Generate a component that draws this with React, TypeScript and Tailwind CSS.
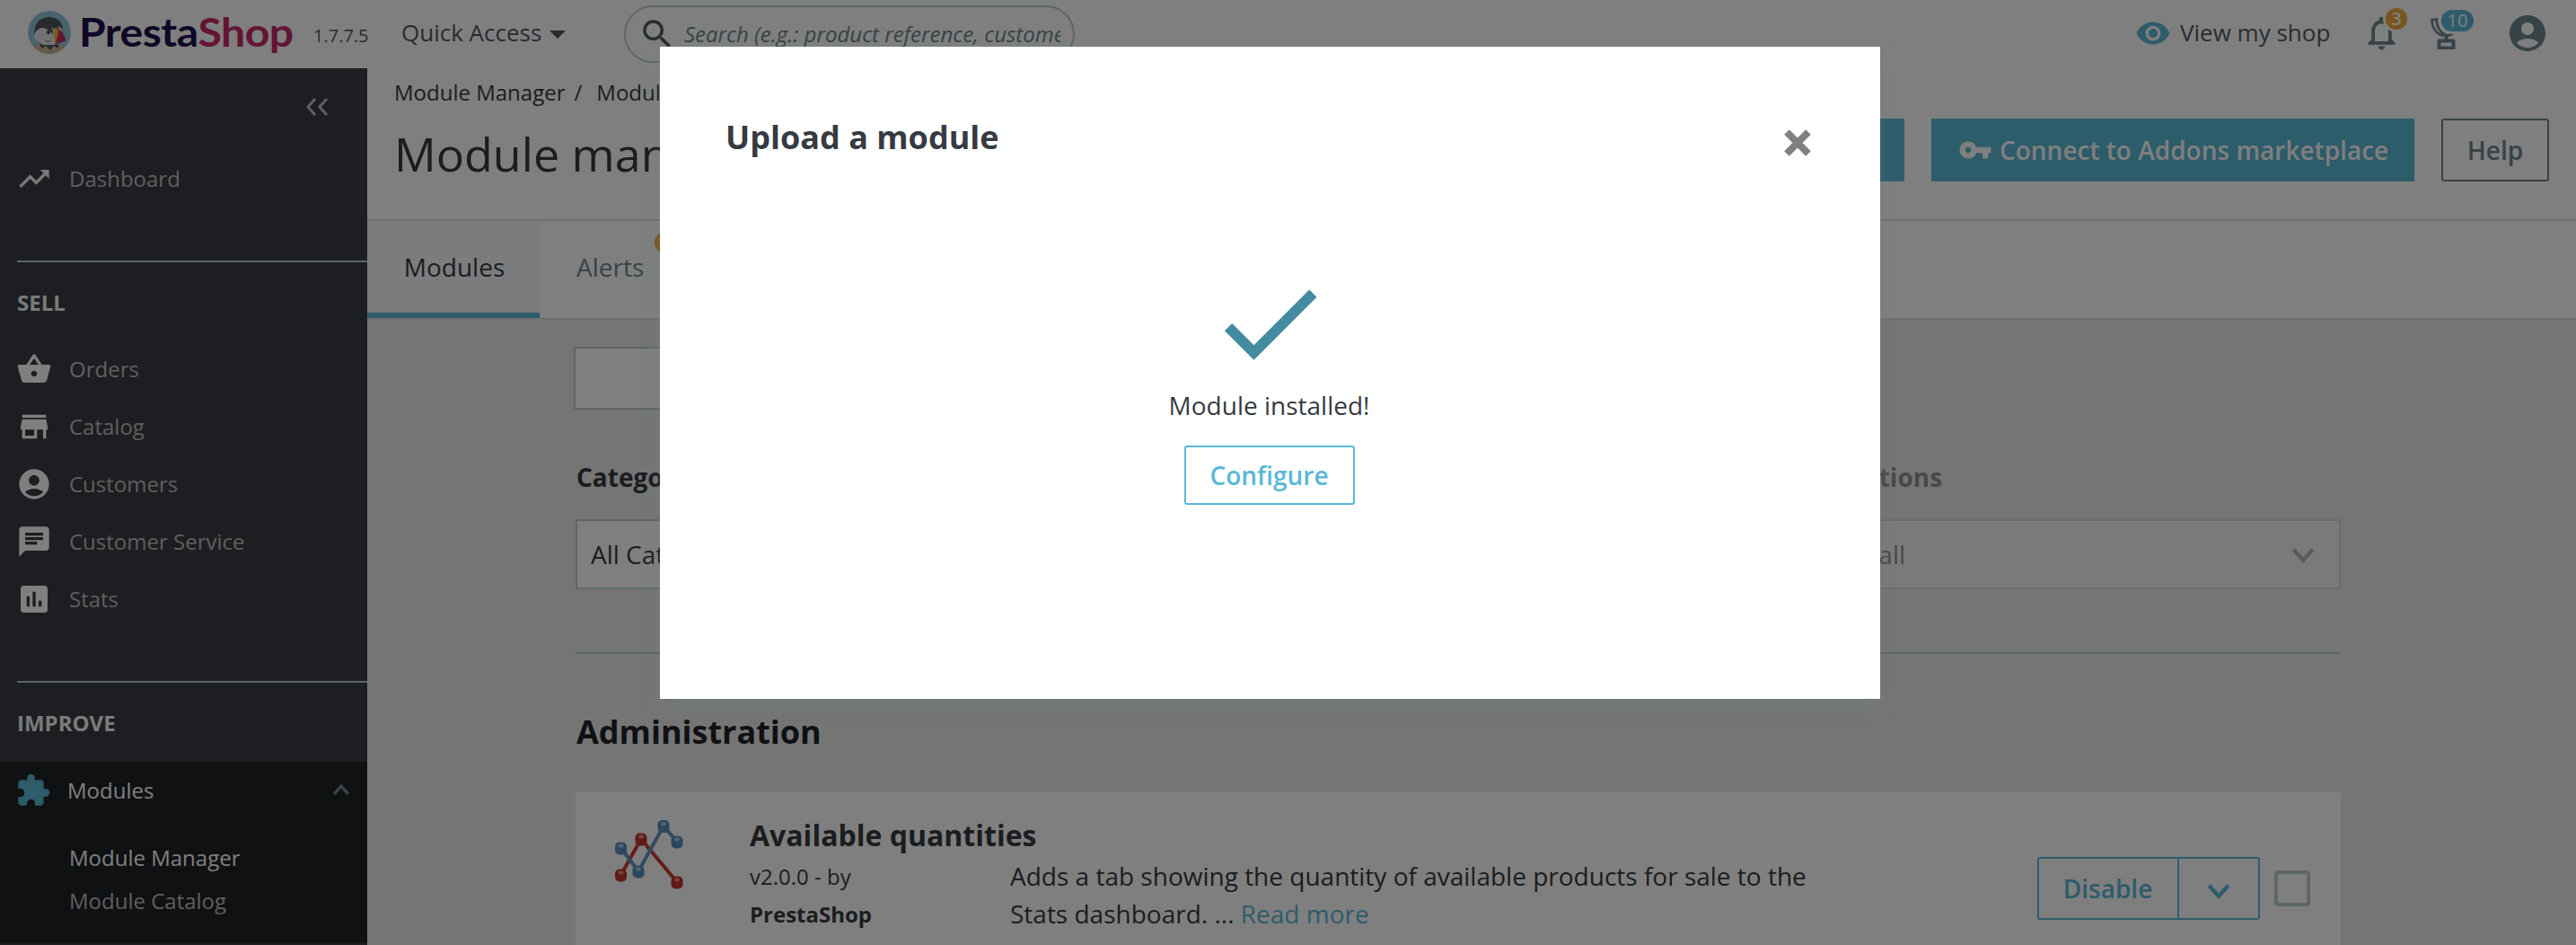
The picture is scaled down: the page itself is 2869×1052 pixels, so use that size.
import React from "react";
import {
  MdTrendingUp, MdShoppingBasket, MdStore, MdAccountCircle, MdChat, MdAssessment,
  MdExtension, MdRemoveRedEye, MdNotificationsNone, MdVpnKey, MdCheck, MdSearch,
} from "react-icons/md";

const sellItems = [
  { label: "Orders", Icon: MdShoppingBasket },
  { label: "Catalog", Icon: MdStore },
  { label: "Customers", Icon: MdAccountCircle },
  { label: "Customer Service", Icon: MdChat },
  { label: "Stats", Icon: MdAssessment },
];

const blueNodes = [[7.5, 33], [27, 59], [55, 8.5], [70, 26]];
const redNodes = [[7.5, 63], [30, 23], [70, 71]];

function Chevron({ className, d = "M4 8l8 9 8-9" }: { className: string; d?: string }) {
  return (
    <svg viewBox="0 0 24 24" className={className} fill="none" stroke="currentColor" strokeWidth="3.4">
      <path d={d} />
    </svg>
  );
}

function Puffin() {
  return (
    <svg viewBox="0 0 48 48" className="h-12 w-12 shrink-0">
      <defs>
        <clipPath id="disc"><circle cx="24" cy="24" r="24" /></clipPath>
      </defs>
      <g clipPath="url(#disc)">
        <circle cx="24" cy="24" r="24" fill="#8fc9da" />
        <path d="M8 38h32v12H8z" fill="#c9b896" />
        <path d="M7 26C7 12 15 7 25 7c10 1 15 8 14 17l-7 14H14z" fill="#50575a" />
        <path d="M7 27c2-6 7-9 13-8 4-1 8 0 11 2 2 5 1 12-1 17-5 1-11 1-15-1-5-3-8-6-8-10z" fill="#e4e4e4" />
        <path d="M14 17c3-2 8-2 11 1 3 3 4 6 3 8-3-4-8-6-14-9z" fill="#50575a" />
        <circle cx="23" cy="24" r="2.2" fill="#50575a" />
        <path d="M18 31c2 3 5 3 8 1-1 3-5 5-8-1z" fill="#8b8b8b" />
        <path d="M34 20c4 2 8 8 8 14-4 0-6 3-11 3-1-6 0-12 3-17z" fill="#c92a6b" />
        <path d="M30 19c3 0 5 2 4 6l-3 12c-2-5-2-12-1-18z" fill="#f0b428" />
        <path d="M33 18c3-1 6 2 6 6l-4-3z" fill="#f3c9d5" />
        <path d="M13 38l3 4 4-3 5 5 4-5 4 3 2-4z" fill="#50575a" />
      </g>
    </svg>
  );
}

function Trophy() {
  return (
    <svg viewBox="0 0 30 36" className="h-9 w-[30px]" fill="none" stroke="#6c868e" strokeWidth="2.600">
      <path d="M9 3H2.500c0 9 5 16 13 18" />
      <path d="M7.500 1c0 9 4 17 11 19 4 1 7-1 9-3" />
      <path d="M18.500 20v7" strokeWidth="4" />
      <path d="M10.500 26.500h16v8h-16z" strokeWidth="4" strokeLinejoin="round" />
    </svg>
  );
}

function StatsGraph() {
  return (
    <svg viewBox="0 0 80 80" className="h-20 w-20">
      <g fill="none" strokeWidth="4">
        <path d="M7.500 63L30 23 70 71" stroke="#cc3a31" />
        <path d="M7.500 33L27 59 55 8.500 70 26" stroke="#6395c6" />
      </g>
      {redNodes.map(([x, y]) => (
        <g key={x}>
          <rect x={x - 6.5} y={y - 6.5} width="13" height="14" rx="5" fill="#c2362e" />
          <rect x={x - 3} y={y - 4.5} width="6" height="4" rx="2" fill="#e28b85" />
        </g>
      ))}
      {blueNodes.map(([x, y]) => (
        <g key={x}>
          <rect x={x - 6.5} y={y - 6.5} width="13" height="14" rx="5" fill="#5b8ebf" />
          <rect x={x - 3} y={y - 4.5} width="6" height="4" rx="2" fill="#a3c4e2" />
        </g>
      ))}
    </svg>
  );
}

function Header() {
  return (
    <header className="flex h-[76px] w-full shrink-0 items-start bg-white text-[#4e5a5f]">
      <div className="flex h-[72px] w-[412px] shrink-0 items-center pl-[31px]">
        <Puffin />
        <span className="ml-[9px] flex w-[240px] origin-left scale-x-112 font-[Lato] text-[43px] leading-[72px] font-bold tracking-[-0.5px]">
          <span className="text-[#1f0f4d]">Presta</span>
          <span className="text-[#c92a6b]">Shop</span>
        </span>
        <span className="mt-2 ml-[21px] text-[20px] leading-7">1.7.7.5</span>
      </div>
      <div className="ml-[35px] flex h-[73px] w-[248px] items-center text-[26px]">
        Quick Access
        <svg viewBox="0 0 18 9" className="mt-1 ml-[9px] h-[9px] w-[18px]" fill="currentColor"><path d="M0 0h18L9 9z" /></svg>
      </div>
      <div className="mt-[6px] flex h-16 w-[502px] items-center rounded-full border-2 border-[#bbcdd2] pr-[14px] pl-[14px]">
        <MdSearch className="size-[42px] shrink-0" />
        <span className="ml-[9px] w-[420px] overflow-hidden text-[24px] whitespace-nowrap text-[#6c868e] italic">
          Search (e.g.: product reference, customer name…)
        </span>
      </div>
      <div className="ml-auto flex h-[73px] items-center">
        <MdRemoveRedEye className="size-[40px] text-[#5ab8d6]" />
        <span className="ml-[10px] w-[204px] text-[26px]">View my shop</span>
        <div className="relative h-9 w-[74px]">
          <MdNotificationsNone className="-mt-[5px] -ml-[2px] size-[45px] text-[#6c868e]" />
          <span className="absolute -top-[10px] left-[25px] flex size-6 items-center justify-center rounded-full bg-[#f0ac3a] text-[20px] font-semibold text-white ring-3 ring-white">3</span>
        </div>
        <div className="relative h-9 w-[85px]">
          <Trophy />
          <span className="absolute -top-[8px] left-[13px] flex h-6 w-9 items-center justify-center rounded-full bg-[#5ab8d6] text-[20px] text-white ring-3 ring-white">10</span>
        </div>
        <MdAccountCircle className="mr-[30px] size-[48px] text-[#6c868e]" />
      </div>
    </header>
  );
}

function Sidebar() {
  return (
    <nav className="flex w-[409px] shrink-0 flex-col bg-[#3a3c43] text-[24px] text-[#bebebe]">
      <div className="flex h-[86px] items-center justify-end pr-[43px]">
        <svg viewBox="0 0 26 20" className="h-5 w-[26px]" fill="none" stroke="currentColor" strokeWidth="3"><path d="M11 1L3 10l8 9M24 1l-8 9 8 9" /></svg>
      </div>
      <div className="flex h-[74px] items-center pl-[18px]">
        <MdTrendingUp className="size-[40px] text-white/95" />
        <span className="ml-[19px]">Dashboard</span>
      </div>
      <div className="mt-[54px] ml-[19px] h-[2px] bg-[#b8c8cd]" />
      <div className="mt-[27px] ml-[19px] h-9 text-[24px] leading-9 font-bold text-[#f4f4f4]">SELL</div>
      <div className="mt-[24px] flex flex-col">
        {sellItems.map(({ label, Icon }) => (
          <div key={label} className="flex h-16 items-center pl-[18px]">
            <Icon className="size-[40px] text-white" />
            <span className="ml-[19px]">{label}</span>
          </div>
        ))}
      </div>
      <div className="mt-[59px] ml-[19px] h-[2px] bg-[#b8c8cd]" />
      <div className="mt-[27px] ml-[19px] h-9 text-[24px] leading-9 font-bold text-[#f4f4f4]">IMPROVE</div>
      <div className="mt-[25px] h-[202px] bg-[#202226]">
        <div className="flex h-[63px] items-center pr-[17px] pl-[17px]">
          <MdExtension className="size-[40px] text-[#5ab8d6]" />
          <span className="ml-[18px] text-white">Modules</span>
          <Chevron className="ml-auto size-[24px] text-[#6c868e]" d="M4 16l8-9 8 9" />
        </div>
        <div className="mt-[20px] h-12 pl-[77px] leading-[48px] text-white">Module Manager</div>
        <div className="h-12 pl-[77px] leading-[48px]">Module Catalog</div>
      </div>
    </nav>
  );
}

function Filters() {
  return (
    <>
      <div className="mt-[30px] -ml-[2px] h-[70px] w-[1400px] border-2 border-[#bbcdd2] bg-white" />
      <div className="mt-[55px] flex">
        <div className="w-[1310px]">
          <div className="h-10 pl-px text-[28px] leading-10 font-bold text-[#363a41]">Category</div>
          <div className="mt-[27px] flex h-[78px] w-[620px] items-center border-2 border-[#bbcdd2] bg-white pb-px pl-[15px] text-[28px] text-[#363a41]">All Categories</div>
        </div>
        <div className="w-[656px] opacity-50">
          <div className="h-10 pl-[40px] text-[28px] leading-10 font-bold text-[#363a41]">Bulk actions</div>
          <div className="mt-[27px] flex h-[78px] items-center border-2 border-[#bbcdd2] bg-white pr-[24px] pb-px pl-[61px] text-[28px] text-[#363a41]">
            Show all
            <Chevron className="ml-auto size-[32px] text-[#6c868e]" />
          </div>
        </div>
      </div>
      <div className="mt-[70px] h-[2px] bg-[#bbcdd2]" />
    </>
  );
}

function ModuleCard() {
  return (
    <div className="mt-[30px] flex h-[200px] bg-white text-[#363a41]">
      <div className="w-[194px] pt-[29px] pl-[43px]"><StatsGraph /></div>
      <div className="pt-[25px]">
        <div className="h-[46px] text-[32px] leading-[46px] font-bold">Available quantities</div>
        <div className="flex pt-[2px]">
          <div className="w-[290px] text-[24px] leading-[42px]">
            <div>v2.0.0 - by</div>
            <div className="font-bold">PrestaShop</div>
          </div>
          <div className="-mt-[1px] w-[920px] text-[28px] leading-[42px]">
            Adds a tab showing the quantity of available products for sale to the
            <br />
            Stats dashboard. ... <span className="text-[#5ab8d6]">Read more</span>
          </div>
        </div>
      </div>
      <div className="mt-[72px] ml-auto flex h-[70px] items-center pr-[34px]">
        <div className="flex h-[70px] rounded-[3px] border-2 border-[#5ab8d6] text-[28px] font-semibold text-[#5ab8d6]">
          <div className="flex w-[156px] items-center justify-center border-r-2 border-[#5ab8d6] pr-px">Disable</div>
          <div className="flex w-[88px] items-center justify-center pt-[3px] pr-px"><Chevron className="size-[32px]" /></div>
        </div>
        <div className="ml-4 size-10 rounded-[4px] border-4 border-[#bbcdd2]" />
      </div>
    </div>
  );
}

function Content() {
  return (
    <main className="flex min-w-0 flex-1 flex-col bg-[#ebebeb]">
      <div className="flex h-[170px] shrink-0 justify-between border-b-2 border-[#dfdfdf] bg-white pr-[30px] pl-[30px]">
        <div className="text-[#363a41]">
          <div className="mt-[9px] flex h-9 text-[24px] leading-9">
            <span>Module Manager</span>
            <span className="ml-[10px]">/</span>
            <span className="ml-[16px]">Modules</span>
          </div>
          <div className="mt-[14px] h-[72px] text-[52px] leading-[72px] text-[#363a41]">Module manager</div>
        </div>
        <div className="mt-[56px] flex h-[70px] gap-[30px] text-[28px] font-semibold">
          <div className="flex w-[310px] items-center justify-center bg-[#5ab8d6] text-white">Upload a module</div>
          <div className="flex w-[538px] items-center bg-[#5ab8d6] pl-[30px] text-white">
            <MdVpnKey className="size-[38px]" />
            <span className="ml-[8px]">Connect to Addons marketplace</span>
          </div>
          <div className="flex w-[120px] items-center justify-center rounded-[3px] border-2 border-[#6c868e] text-[#6c868e]">Help</div>
        </div>
      </div>
      <div className="flex h-[110px] shrink-0 border-b-2 border-[#dfdfdf] bg-white text-[28px]">
        <div className="flex w-[192px] items-center justify-center border-b-6 border-[#5ab8d6] bg-[#f6f8fd] pl-[2px] text-[#363a41]">Modules</div>
        <div className="relative flex w-[160px] items-center pb-[6px] pl-[41px] text-[#6c868e]">
          Alerts
          <span className="absolute top-[12px] left-[128px] size-6 rounded-full bg-[#f0ac3a]" />
        </div>
      </div>
      <div className="ml-[232px] w-[1966px]">
        <Filters />
        <h2 className="mt-[61px] h-[63px] pl-px text-[36px] leading-[52px] font-bold text-[#202226]">Administration</h2>
        <ModuleCard />
      </div>
    </main>
  );
}

function UploadDialog() {
  return (
    <div className="absolute inset-0 bg-black/50">
      <div className="mt-[52px] ml-[735px] flex h-[726px] w-[1359px] flex-col bg-white text-[#363a41] shadow-[0_8px_16px_0_rgba(108,134,142,0.3)]">
        <div className="flex h-[200px] items-start justify-between pr-[77px] pl-[73px]">
          <h4 className="mt-[75px] text-[36px] leading-[52px] font-bold">Upload a module</h4>
          <svg viewBox="0 0 30 30" className="mt-[92px] size-[30px]" stroke="#808080" strokeWidth="8"><path d="M3 3l24 24M27 3L3 27" /></svg>
        </div>
        <div className="flex flex-col items-center pr-[2px]">
          <MdCheck className="mt-[38px] size-[140px] text-[#448ba1]" />
          <p className="mt-px h-[40px] text-[28px] leading-10">Module installed!</p>
          <button className="mt-[25px] h-[66px] w-[190px] rounded-[3px] border-2 border-[#5ab8d6] text-[28px] font-semibold text-[#5ab8d6]">Configure</button>
        </div>
      </div>
    </div>
  );
}

export default function App() {
  return (
    <div className="relative flex h-[1052px] w-[2869px] flex-col overflow-hidden font-['Open_Sans',sans-serif]">
      <Header />
      <div className="flex min-h-0 flex-1">
        <Sidebar />
        <Content />
      </div>
      <UploadDialog />
    </div>
  );
}
